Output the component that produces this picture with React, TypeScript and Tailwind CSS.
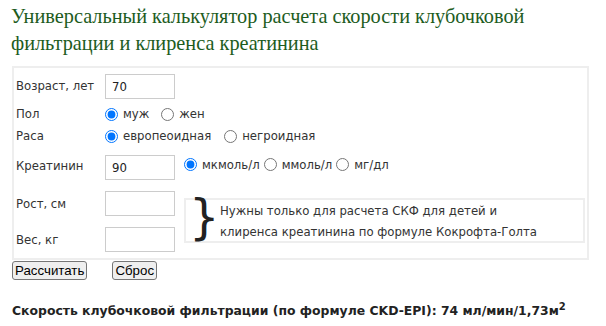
import React from 'react'

// Calculator form: labels on the left, inputs and radio groups on the right
const sans = { fontFamily: '"DejaVu Sans Condensed", "DejaVu Sans", Verdana, sans-serif' }

function Radio({ name, label, checked }: { name: string; label: string; checked?: boolean }) {
  return (
    <label className="flex items-center">
      <input type="radio" name={name} defaultChecked={checked} className="m-0 mr-[5px] h-[13px] w-[13px] accent-[#0075ff]" />
      <span>{label}</span>
    </label>
  )
}

function TextInput({ value }: { value?: string }) {
  return (
    <input
      type="text"
      defaultValue={value}
      className="h-[25px] w-[70px] border border-[#ccc] bg-white px-[6px] text-[13px] text-[#222] outline-none"
      style={sans}
    />
  )
}

export default function App() {
  return (
    <div className="w-[606px] bg-white text-[13px] text-[#333]" style={sans}>
      <h1
        className="px-[11px] pt-[3px] text-[20.3px] font-normal leading-[27px] text-[#1d5c1d]"
        style={{ fontFamily: '"Liberation Serif", Georgia, serif' }}
      >
        Универсальный калькулятор расчета скорости клубочковой фильтрации и клиренса креатинина
      </h1>

      <div className="mx-[12px] mt-[9px] w-[577px] border-2 border-[#eee] px-[2px] pt-[6px] pb-[6px]">
        {/* age */}
        <div className="flex h-[24px] items-center">
          <div className="w-[89px]">Возраст, лет</div>
          <TextInput value="70" />
        </div>

        {/* sex */}
        <div className="mt-[5px] flex h-[22px] items-center">
          <div className="w-[89px]">Пол</div>
          <div className="flex gap-[12px]">
            <Radio name="sex" label="муж" checked />
            <Radio name="sex" label="жен" />
          </div>
        </div>

        {/* race */}
        <div className="flex h-[22px] items-center">
          <div className="w-[89px]">Раса</div>
          <div className="flex gap-[13px]">
            <Radio name="race" label="европеоидная" checked />
            <Radio name="race" label="негроидная" />
          </div>
        </div>

        {/* creatinine */}
        <div className="mt-[8px] flex h-[25px] items-start">
          <div className="w-[89px] pt-[1px]">Креатинин</div>
          <TextInput value="90" />
          <div className="ml-[9px] -mt-[1px] flex gap-[4px] pt-[4px] leading-[7px]">
            <Radio name="unit" label="мкмоль/л" checked />
            <Radio name="unit" label="ммоль/л" />
            <Radio name="unit" label="мг/дл" />
          </div>
        </div>

        {/* height and weight, with note */}
        <div className="mt-[11px] flex">
          <div className="flex flex-col gap-[11px]">
            <div className="flex h-[25px] items-center">
              <div className="w-[89px]">Рост, см</div>
              <TextInput />
            </div>
            <div className="flex h-[25px] items-center">
              <div className="w-[89px]">Вес, кг</div>
              <TextInput />
            </div>
          </div>
          <div className="ml-[9px] mt-[7px] flex h-[45px] w-[403px] items-center border-2 border-[#eee]">
            <span
              className="-mt-[8px] ml-[3px] w-[32px] text-[48px] leading-[48px] text-[#222]"
              style={{ fontFamily: '"DejaVu Sans", sans-serif' }}
            >
              {'}'}
            </span>
            <div className="-ml-[1px] leading-[21px] text-[#333]">
              Нужны только для расчета СКФ для детей и
              <br />
              клиренса креатинина по формуле Кокрофта-Голта
            </div>
          </div>
        </div>
      </div>

      <div className="ml-[12px] flex gap-[25px] pt-[1px]" style={{ fontFamily: '"Liberation Sans", Arial, sans-serif' }}>
        <button className="h-[19px] rounded-[3px] border border-[#767676] bg-[#efefef] px-[2px] text-[13.3px] leading-[15px] text-black">
          Рассчитать
        </button>
        <button className="h-[19px] rounded-[3px] border border-[#767676] bg-[#efefef] px-[2px] text-[13.3px] leading-[15px] text-black">
          Сброс
        </button>
      </div>

      <p
        className="mt-[22px] px-[12px] text-[12.4px] font-bold text-[#222]"
        style={{ fontFamily: '"DejaVu Sans", Verdana, sans-serif' }}
      >
        Скорость клубочковой фильтрации (по формуле CKD-EPI): 74 мл/мин/1,73м
        <sup className="text-[10px]">2</sup>
      </p>
    </div>
  )
}
